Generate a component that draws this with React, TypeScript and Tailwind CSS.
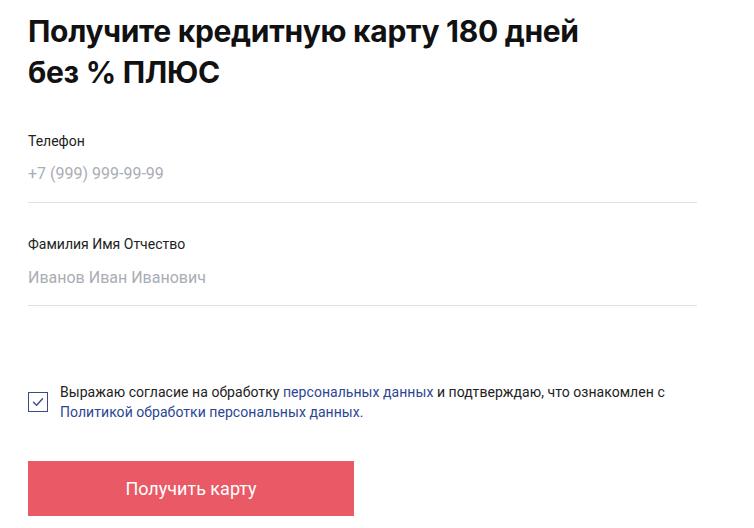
import React from "react";

export default function App() {
  return (
    <div className="w-[754px] h-[528px] bg-white overflow-hidden" style={{ fontFamily: "Roboto, 'Noto Sans', sans-serif" }}>
      <div className="pl-[28px] pr-[57px] pt-[11px]">
        <h1 className="text-[30px] leading-[41px] font-bold text-[#111] tracking-[-0.3px]" style={{ fontFamily: "Inter, 'Noto Sans', sans-serif" }}>
          Получите кредитную карту 180 дней
          <br />
          без % ПЛЮС
        </h1>
        <div className="mt-[38px]">
          <div className="text-[14px] leading-[20px] text-[#222]">Телефон</div>
          <div className="mt-[13px] text-[16px] leading-[20px] text-[#a9adb4]">+7 (999) 999-99-99</div>
          <div className="mt-[18px] h-px bg-[#e1e1e3]" />
        </div>
        <div className="mt-[31px]">
          <div className="text-[14px] leading-[20px] text-[#222]">Фамилия Имя Отчество</div>
          <div className="mt-[14px] text-[16px] leading-[20px] text-[#a9adb4]">Иванов Иван Иванович</div>
          <div className="mt-[17px] h-px bg-[#e1e1e3]" />
        </div>
        <div className="mt-[76px] flex items-start gap-[12px]">
          <div className="mt-[10px] w-[20px] h-[20px] shrink-0 border-[1.5px] border-[#3b4a8e] flex items-center justify-center">
            <svg width="12" height="10" viewBox="0 0 12 10" fill="none">
              <path d="M1.5 5.2 L4.6 8.2 L10.5 1.8" stroke="#3b4a8e" strokeWidth="1.4" strokeLinecap="round" strokeLinejoin="round" />
            </svg>
          </div>
          <p className="text-[14px] leading-[20px] text-[#222] tracking-[0.05px]">
            Выражаю согласие на обработку <span className="text-[#2c4694]">персональных данных</span> и подтверждаю, что ознакомлен с
            <br />
            <span className="text-[#2c4694]">Политикой обработки персональных данных.</span>
          </p>
        </div>
        <button className="mt-[39px] w-[326px] h-[55px] bg-[#ea5a66] text-white text-[18px] flex items-center justify-center">
          Получить карту
        </button>
      </div>
    </div>
  );
}
